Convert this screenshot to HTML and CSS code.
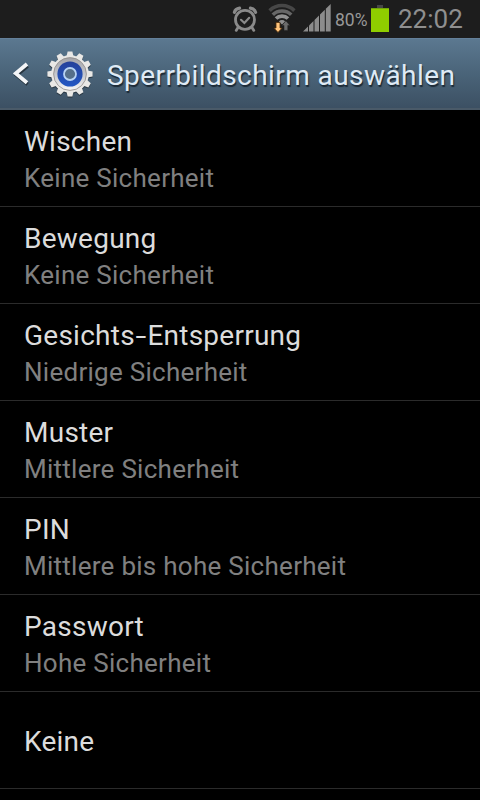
FILE: index.html
```html
<!DOCTYPE html>
<html lang="de">
<head>
    <meta charset="UTF-8">
    <meta name="viewport" content="width=device-width, initial-scale=1.0">
    <title>Sperrbildschirm auswählen</title>
    <link rel="stylesheet" href="styles.css">
</head>
<body>
    <div class="statusbar">
        <svg class="icon-alarm" width="26" height="28" viewBox="0 0 26 28">
            <g fill="none" stroke="#8a8a8a" stroke-linecap="round">
                <circle cx="13" cy="14.8" r="9.5" stroke-width="2.8"/>
                <path d="M9 14.8l3.4 3.2 4.8-5.2" stroke-width="2.2"/>
                <path d="M6 22.6l-1.8 2.8M20 22.6l1.8 2.8" stroke-width="2.8"/>
                <path d="M2.4 7.4C3 5 5 3.6 7.6 3.2M23.6 7.4C23 5 21 3.6 18.4 3.2" stroke-width="3.2"/>
            </g>
        </svg>
        <svg class="icon-wifi" width="28" height="30" viewBox="0 0 28 30">
            <g fill="none" stroke-width="3.6">
                <path d="M1.6 7.6a17.8 17.8 0 0 1 24.8 0" stroke="#474747"/>
                <path d="M4.8 11.8a13 13 0 0 1 18.4 0" stroke="#676767"/>
                <path d="M8 15.6a8.4 8.4 0 0 1 12 0" stroke="#909090"/>
            </g>
            <path d="M10.8 18.4a4.4 4.4 0 0 1 6.4 0L14 21.6z" fill="#909090"/>
            <path d="M8 19.4h4v5.6h2.2L10 29.4l-4.2-4.4H8z" fill="#ffc47c" stroke="#4a2a08" stroke-width=".8"/>
            <path d="M16 27.4v-5h-2.1l4-4.6 4 4.6h-2.1v5z" fill="#6c6c6c" stroke="#1d1d1d" stroke-width=".5"/>
        </svg>
        <svg class="icon-signal" width="28" height="28" viewBox="0 0 28 28">
            <g fill="#8c8c8c">
                <path d="M0 27.5l5-5v5z"/>
                <path d="M6 21.6l4.5-4.5v10.4H6z"/>
                <path d="M11.5 16l4.5-4.5v16h-4.5z"/>
                <path d="M17 10.6l4.8-4.8v21.7H17z"/>
                <path d="M22.8 4.8L27.7 0v27.5h-4.9z"/>
            </g>
        </svg>
        <span class="percent">80%</span>
        <svg class="icon-battery" width="18" height="27" viewBox="0 0 18 27">
            <path d="M6 0h6v3H6z" fill="#464646"/>
            <path d="M0 3h18v2H0z" fill="#73a40a"/>
            <path d="M0 4h18v23H0z" fill="#8fce00"/>
        </svg>
        <span class="clock">22:02</span>
    </div>

    <div class="header">
        <svg class="icon-back" width="16" height="26" viewBox="0 0 16 26">
            <path d="M14 4L3 13.2l11 9.2" fill="none" stroke="#26343f" stroke-width="3.6" transform="translate(0.6 1)"/>
            <path d="M14 3L2.8 12.4 14 21.8" fill="none" stroke="#f4f6f8" stroke-width="3.8"/>
        </svg>
        <svg class="icon-settings" width="50" height="50" viewBox="-25 -25 50 50">
            <defs>
                <linearGradient id="dish" x1="0" y1="0" x2="0" y2="1">
                    <stop offset="0" stop-color="#a4a4a8"/>
                    <stop offset="0.5" stop-color="#c4c6cc"/>
                    <stop offset="1" stop-color="#f8f8f8"/>
                </linearGradient>
                <linearGradient id="blue" x1="0" y1="0" x2="0" y2="1">
                    <stop offset="0" stop-color="#25419a"/>
                    <stop offset="1" stop-color="#2358c4"/>
                </linearGradient>
                <path id="tooth" d="M-3.6-17l1.2-5.6h4.8L3.6-17z"/>
                <g id="gear">
                    <circle r="18.8"/>
                    <use href="#tooth"/>
                    <use href="#tooth" transform="rotate(30)"/>
                    <use href="#tooth" transform="rotate(60)"/>
                    <use href="#tooth" transform="rotate(90)"/>
                    <use href="#tooth" transform="rotate(120)"/>
                    <use href="#tooth" transform="rotate(150)"/>
                    <use href="#tooth" transform="rotate(180)"/>
                    <use href="#tooth" transform="rotate(210)"/>
                    <use href="#tooth" transform="rotate(240)"/>
                    <use href="#tooth" transform="rotate(270)"/>
                    <use href="#tooth" transform="rotate(300)"/>
                    <use href="#tooth" transform="rotate(330)"/>
                </g>
            </defs>
            <use href="#gear" y="1.2" fill="#2c3a46"/>
            <use href="#gear" fill="#e9e8e6"/>
            <circle r="16.4" fill="url(#dish)" stroke="#8f8a86" stroke-width=".8"/>
            <circle r="12.6" fill="url(#blue)"/>
            <circle r="6" fill="#56708a" stroke="#b8d4f4" stroke-width="1.8"/>
        </svg>
        <h1 class="title">Sperrbildschirm auswählen</h1>
    </div>

    <ul class="list">
        <li class="item">
            <span class="name">Wischen</span>
            <span class="summary">Keine Sicherheit</span>
        </li>
        <li class="item">
            <span class="name">Bewegung</span>
            <span class="summary">Keine Sicherheit</span>
        </li>
        <li class="item">
            <span class="name">Gesichts<span class="hyphen">-</span>Entsperrung</span>
            <span class="summary">Niedrige Sicherheit</span>
        </li>
        <li class="item">
            <span class="name">Muster</span>
            <span class="summary">Mittlere Sicherheit</span>
        </li>
        <li class="item">
            <span class="name">PIN</span>
            <span class="summary">Mittlere bis hohe Sicherheit</span>
        </li>
        <li class="item">
            <span class="name">Passwort</span>
            <span class="summary">Hohe Sicherheit</span>
        </li>
        <li class="item single">
            <span class="name">Keine</span>
        </li>
    </ul>
</body>
</html>
```
FILE: styles.css
```css
* {
    box-sizing: border-box;
}

body {
    margin: 0;
    height: 800px;
    overflow: hidden;
    background-color: #000;
    font-family: Roboto, 'Liberation Sans', sans-serif;
}

.statusbar {
    display: flex;
    justify-content: flex-end;
    height: 38px;
    padding-right: 15px;
    background-color: #1d1d1d;
    color: #989898;
    line-height: 38px;
    white-space: nowrap;
}

.icon-alarm {
    margin: 5px 10px 0 0;
}

.icon-wifi {
    margin: 3px 7px 0 0;
}

.icon-signal {
    margin: 4px 4px 0 0;
}

.percent {
    width: 34px;
    margin-right: 2px;
    font-size: 17.5px;
    line-height: 40px;
}

.icon-battery {
    margin: 5px 9px 0 0;
}

.clock {
    width: 67px;
    font-size: 26px;
    color: #8f8f8f;
}

.header {
    display: flex;
    align-items: center;
    height: 72px;
    padding-left: 13px;
    background: linear-gradient(#5b7890, #4a6479 50%, #3c5063);
    border-top: 1px solid #64809a;
    border-bottom: 2px solid #4a5a68;
}

.icon-back {
    margin-right: 16px;
}

.title {
    margin: 3px 0 0 12px;
    font-size: 28px;
    font-weight: normal;
    letter-spacing: 0.43px;
    color: #dfeaf5;
    text-shadow: 1px 2px 1px #1c2935;
    white-space: nowrap;
}

.list {
    margin: 0;
    padding: 0;
    list-style: none;
}

.item {
    display: flex;
    flex-direction: column;
    justify-content: center;
    height: 97px;
    padding: 1px 0 0 24px;
    border-bottom: 1px solid #2b2b2b;
}

.single {
    padding-top: 3px;
}

.name {
    font-size: 28px;
    line-height: 38px;
    letter-spacing: 0.25px;
    color: #dcdcdc;
}

.hyphen {
    display: inline-block;
    margin: 0 2px 0 2.5px;
    transform: scaleX(1.4);
}

.summary {
    font-size: 26px;
    line-height: 34px;
    letter-spacing: 0.27px;
    color: #808080;
}
```
